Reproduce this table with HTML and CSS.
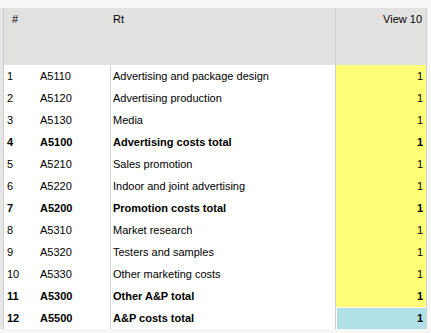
FILE: index.html
```html
<!DOCTYPE html>
<html>
<head>
<meta charset="utf-8">
<link rel="stylesheet" href="styles.css">
</head>
<body>
<div class="topbar"></div>
<div class="frame">
  <div class="grid">
    <div class="hd hd-num">#</div>
    <div class="hd hd-code"></div>
    <div class="hd hd-rt">Rt</div>
    <div class="hd hd-val">View 10</div>

    <div class="c num">1</div><div class="c code">A5110</div><div class="c desc">Advertising and package design</div><div class="c val">1</div>
    <div class="c num">2</div><div class="c code">A5120</div><div class="c desc">Advertising production</div><div class="c val">1</div>
    <div class="c num">3</div><div class="c code">A5130</div><div class="c desc">Media</div><div class="c val">1</div>
    <div class="c num b">4</div><div class="c code b">A5100</div><div class="c desc b">Advertising costs total</div><div class="c val b">1</div>
    <div class="c num">5</div><div class="c code">A5210</div><div class="c desc">Sales promotion</div><div class="c val">1</div>
    <div class="c num">6</div><div class="c code">A5220</div><div class="c desc">Indoor and joint advertising</div><div class="c val">1</div>
    <div class="c num b">7</div><div class="c code b">A5200</div><div class="c desc b">Promotion costs total</div><div class="c val b">1</div>
    <div class="c num">8</div><div class="c code">A5310</div><div class="c desc">Market research</div><div class="c val">1</div>
    <div class="c num">9</div><div class="c code">A5320</div><div class="c desc">Testers and samples</div><div class="c val">1</div>
    <div class="c num">10</div><div class="c code">A5330</div><div class="c desc">Other marketing costs</div><div class="c val">1</div>
    <div class="c num b">11</div><div class="c code b">A5300</div><div class="c desc b">Other A&amp;P total</div><div class="c val b">1</div>
    <div class="c num b">12</div><div class="c code b">A5500</div><div class="c desc b">A&amp;P costs total</div><div class="c val b total">1</div>
  </div>
</div>
</body>
</html>
```

FILE: styles.css
```css
html, body {
  margin: 0;
  padding: 0;
  background: #f7f7f8;
  font-family: "Liberation Sans", Arial, sans-serif;
  font-size: 11px;
  color: #000;
}

.topbar {
  height: 8px;
  background: #f7f8fa;
}

.frame {
  display: flex;
  padding-left: 3px;
  background: linear-gradient(to right, #e6e6e6 0, #e6e6e6 3px, transparent 3px);
}

.grid {
  display: grid;
  grid-template-columns: 34px 72px 225px 91px;
  grid-auto-rows: 22px;
  grid-template-rows: 57px;
  background: #fff;
  border-left: 1px solid #cfcfcf;
  border-right: 1px solid #cfcfcf;
}

.hd {
  background: #e2e2e0;
  padding-top: 5px;
  line-height: 13px;
}

.hd-num { padding-left: 8px; }
.hd-rt { padding-left: 3px; }
.hd-val {
  border-left: 1px solid #cfcfcf;
  text-align: right;
  padding-right: 4px;
}

.c {
  line-height: 22px;
  white-space: nowrap;
}

.num { padding-left: 3px; }
.code { padding-left: 2px; }
.desc {
  border-left: 1px solid #d4d4d4;
  padding-left: 2px;
}
.val {
  border-left: 1px solid #cfcfcf;
  background: #ffff77;
  text-align: right;
  padding-right: 3px;
}
.b { font-weight: bold; }

.val.total {
  background: #b0e0e6;
  border-top: 1px solid #fff;
  box-shadow: inset 1px 0 0 #fff;
  line-height: 20px;
}
```
